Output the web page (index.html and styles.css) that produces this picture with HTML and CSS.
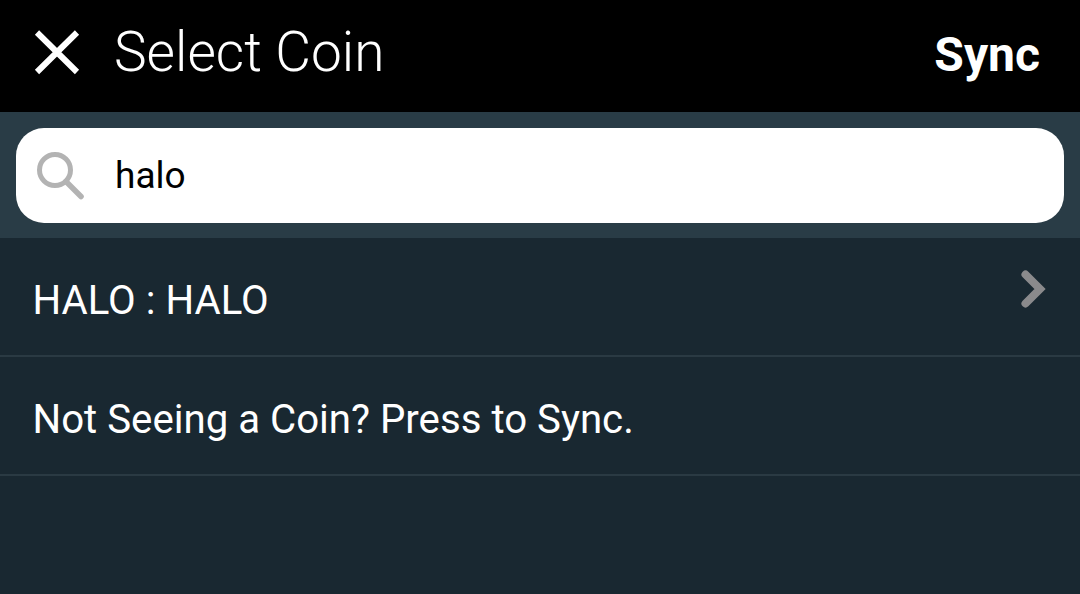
FILE: index.html
```html
<!DOCTYPE html>
<html lang="en">
<head>
<meta charset="utf-8">
<title>Select Coin</title>
<link rel="stylesheet" href="styles.css">
</head>
<body>
<div class="app">
  <header class="topbar">
    <svg class="close-icon" width="46" height="46" viewBox="0 0 46 46" aria-hidden="true">
      <path d="M3 3.500 L43 43 M43 3.500 L3 43" stroke="#fff" stroke-width="6" fill="none"/>
    </svg>
    <h1 class="title">Select Coin</h1>
    <span class="sync">Sync</span>
  </header>
  <div class="search-band">
    <div class="search-box">
      <svg class="search-icon" width="48" height="48" viewBox="0 0 48 48" aria-hidden="true">
        <circle cx="19" cy="18" r="15.5" fill="none" stroke="#b3b3b3" stroke-width="5"/>
        <path d="M30 29.500 L45 44.500" stroke="#b3b3b3" stroke-width="5.500" stroke-linecap="round" fill="none"/>
      </svg>
      <span class="search-text">halo</span>
    </div>
  </div>
  <ul class="list">
    <li class="row">
      <span>HALO : HALO</span>
      <svg class="chevron" width="26" height="38" viewBox="0 0 26 38" aria-hidden="true">
        <path d="M4.500 4.500 L19 19 L4.500 33.500" stroke="#8a8a8c" stroke-width="8" stroke-linejoin="miter" stroke-linecap="round" fill="none"/>
      </svg>
    </li>
    <li class="row"><span>Not Seeing a Coin? Press to Sync.</span></li>
  </ul>
</div>
</body>
</html>
```
FILE: styles.css
```css
* { box-sizing: border-box; margin: 0; padding: 0; }
html, body { width: 1080px; height: 594px; overflow: hidden; background: #192831; }
.app { display: flex; flex-direction: column; height: 594px; font-family: Roboto, "Liberation Sans", sans-serif; color: #fff; }
.topbar { height: 112px; background: #000; display: flex; align-items: center; padding: 0 40px 8px 34px; flex: none; }
.close-icon { flex: none; }
.title { font-family: Roboto, sans-serif; font-weight: 300; font-size: 55px; margin-left: 34px; flex: 1; line-height: 1; }
.sync { font-family: Roboto, sans-serif; font-weight: 700; font-size: 48px; line-height: 1; margin-top: 6px; }
.search-band { height: 126px; background: #293c46; padding: 16px 16px 15px; flex: none; }
.search-box { height: 95px; background: #fff; border-radius: 28px; display: flex; align-items: center; padding: 0 0 0 20px; }
.search-icon { flex: none; }
.search-text { color: #000; font-size: 37px; margin-left: 31px; }
.list { list-style: none; }
.row { height: 119px; border-bottom: 2px solid #2a3a43; display: flex; align-items: center; justify-content: space-between; padding: 7px 33px 0 32.500px; font-size: 40.200px; }
.chevron { margin-bottom: 22px; }
```
